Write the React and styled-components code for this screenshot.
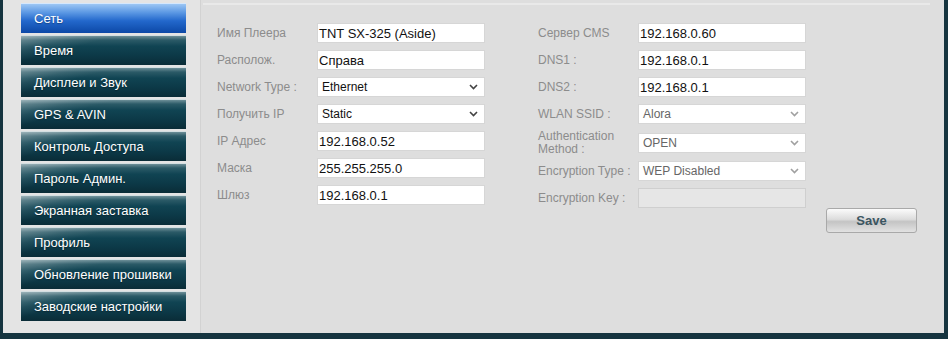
import React from 'react';
import styled, { createGlobalStyle } from 'styled-components';

const GlobalStyle = createGlobalStyle`
  html, body { margin: 0; padding: 0; background: #15343f; }
  body { font-family: "Liberation Sans", Arial, sans-serif; }
`;

const Frame = styled.div`
  width: 948px;
  height: 339px;
  box-sizing: border-box;
  padding: 0 4px 6px 3px;
  background: #15343f;
  display: flex;
`;

const Sidebar = styled.div`
  width: 197px;
  background: #e4e4e4;
  padding: 3px 0 0 18px;
  box-sizing: border-box;
  display: flex;
  flex-direction: column;
  gap: 2px;
`;

const MenuButton = styled.div`
  width: 165px;
  height: 30px;
  box-sizing: border-box;
  padding-left: 13px;
  display: flex;
  align-items: center;
  font-size: 13px;
  color: #fff;
  border-top: 1px solid ${({ $active }) => ($active ? '#d5e7fc' : '#d4dfe2')};
  background: ${({ $active }) =>
    $active
      ? 'linear-gradient(180deg, #9cc6f4 0%, #5a97e3 30%, #2368cc 58%, #0c48a6 100%)'
      : 'linear-gradient(165deg, rgba(255,255,255,0.32) 0%, rgba(255,255,255,0.08) 22%, rgba(255,255,255,0) 35%), linear-gradient(180deg, #6d8f98 0%, #2b5a67 14%, #104453 35%, #0c3846 70%, #0a2c37 100%)'};
  text-shadow: 0 1px 1px rgba(0, 0, 0, 0.3);
`;

const Main = styled.div`
  flex: 1;
  background: #dedede;
  border-left: 1px solid #d2d2d2;
  padding: 3px 14px 0 2px;
  box-sizing: border-box;
  display: flex;
  flex-direction: column;
`;

const TopRule = styled.div`
  height: 2px;
  background: #e9e9e9;
`;

const Columns = styled.div`
  display: flex;
  padding: 18px 0 0 14px;
  gap: 53px;
`;

const Column = styled.div`
  display: flex;
  flex-direction: column;
  gap: 7px;
`;

const Row = styled.div`
  display: flex;
  align-items: center;
  height: ${({ $tall }) => ($tall ? 22 : 20)}px;
  margin-top: ${({ $tall }) => ($tall ? 1 : 0)}px;
`;

const Label = styled.div`
  width: 100px;
  font-size: 12px;
  line-height: 13px;
  color: #8c8c8c;
`;

const Input = styled.div`
  width: 168px;
  height: 20px;
  box-sizing: border-box;
  background: ${({ $disabled }) => ($disabled ? '#e6e6e6' : '#fff')};
  border: 1px solid ${({ $disabled }) => ($disabled ? '#cfcfcf' : '#d6d6d6')};
  padding: 0 6px 0 1px;
  font-size: 13px;
  color: #111;
  display: flex;
  align-items: center;
  justify-content: space-between;
`;

const SelectText = styled.span`
  font-size: 12px;
  padding-left: 3px;
  color: ${({ $muted }) => ($muted ? '#666' : '#111')};
`;

const Chevron = ({ muted }) => (
  <svg width="9" height="6" viewBox="0 0 9 6">
    <path d="M1 1 L4.5 4.5 L8 1" fill="none" stroke={muted ? '#a0a0a0' : '#444'} strokeWidth="1.6" />
  </svg>
);

const SaveRow = styled.div`
  display: flex;
  justify-content: flex-end;
  padding-right: 13px;
  margin-top: 0;
`;

const SaveButton = styled.div`
  width: 91px;
  height: 25px;
  box-sizing: border-box;
  border: 1px solid #a9a9a9;
  border-radius: 3px;
  background: linear-gradient(180deg, #fbfbfb 0%, #dcdcdc 45%, #c4c4c4 55%, #e2e2e2 100%);
  color: #3b5561;
  font-weight: bold;
  font-size: 13px;
  display: flex;
  align-items: center;
  justify-content: center;
`;

const menu = [
  'Сеть',
  'Время',
  'Дисплеи и Звук',
  'GPS & AVIN',
  'Контроль Доступа',
  'Пароль Админ.',
  'Экранная заставка',
  'Профиль',
  'Обновление прошивки',
  'Заводские настройки',
];

const left = [
  { label: 'Имя Плеера', value: 'TNT SX-325 (Aside)' },
  { label: 'Располож.', value: 'Справа' },
  { label: 'Network Type :', value: 'Ethernet', select: true },
  { label: 'Получить IP', value: 'Static', select: true },
  { label: 'IP Адрес', value: '192.168.0.52' },
  { label: 'Маска', value: '255.255.255.0' },
  { label: 'Шлюз', value: '192.168.0.1' },
];

const right = [
  { label: 'Сервер CMS', value: '192.168.0.60' },
  { label: 'DNS1 :', value: '192.168.0.1' },
  { label: 'DNS2 :', value: '192.168.0.1' },
  { label: 'WLAN SSID :', value: 'Alora', select: true, muted: true },
  { label: 'Authentication Method :', value: 'OPEN', select: true, muted: true, tall: true },
  { label: 'Encryption Type :', value: 'WEP Disabled', select: true, muted: true },
  { label: 'Encryption Key :', value: '', disabled: true },
];

const Field = ({ f }) => (
  <Row $tall={f.tall}>
    <Label>{f.label}</Label>
    <Input $disabled={f.disabled}>
      {f.select ? (
        <>
          <SelectText $muted={f.muted}>{f.value}</SelectText>
          <Chevron muted={f.muted} />
        </>
      ) : (
        f.value
      )}
    </Input>
  </Row>
);

const App = () => (
  <>
    <GlobalStyle />
    <Frame>
      <Sidebar>
        {menu.map((m, i) => (
          <MenuButton key={m} $active={i === 0}>{m}</MenuButton>
        ))}
      </Sidebar>
      <Main>
        <TopRule />
        <Columns>
          <Column>
            {left.map((f) => <Field key={f.label} f={f} />)}
          </Column>
          <Column>
            {right.map((f) => <Field key={f.label} f={f} />)}
          </Column>
        </Columns>
        <SaveRow>
          <SaveButton>Save</SaveButton>
        </SaveRow>
      </Main>
    </Frame>
  </>
);

export default App;
